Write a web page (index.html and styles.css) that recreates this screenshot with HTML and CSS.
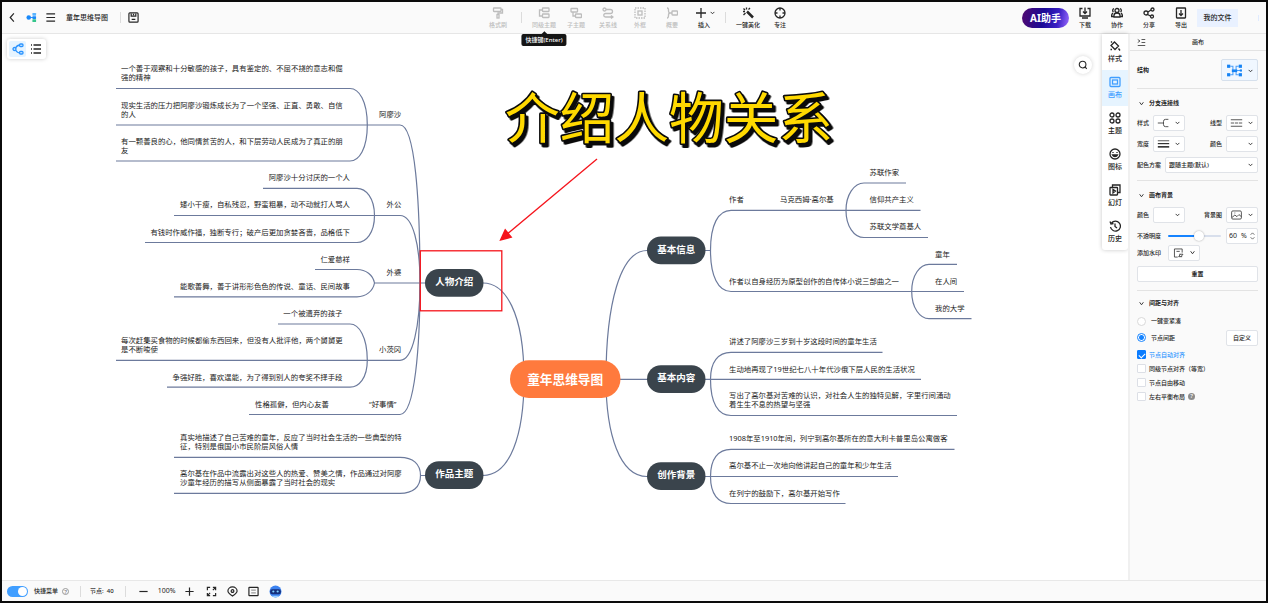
FILE: index.html
```html
<!DOCTYPE html>
<html lang="zh-CN">
<head>
<meta charset="utf-8">
<title>童年思维导图</title>
<link rel="stylesheet" href="styles.css">
</head>
<body>
<div class="app">
  <header class="topbar">
    <div class="top-left">
      <button class="icon-btn" aria-label="返回"><svg class="ico" viewBox="0 0 24 24"><path d="M15 3L7 12l8 9"/></svg></button>
      <button class="icon-btn" aria-label="首页"><svg class="ico" viewBox="0 0 24 24"><g stroke="none"><circle cx="6" cy="12" r="5" fill="#1989fa"/><path d="M8 11h8v2H8z" fill="#1989fa"/><rect x="14" y="2" width="8" height="6" rx="1" fill="#5ab4ff"/><rect x="14" y="9" width="8" height="6" rx="1" fill="#1989fa"/><rect x="14" y="16" width="8" height="6" rx="1" fill="#35c58b"/></g></svg></button>
      <button class="icon-btn" aria-label="菜单"><svg class="ico" viewBox="0 0 24 24"><path d="M3 4h19M3 12h19M3 20h19"/></svg></button>
      <h1 class="doc-title">童年思维导图</h1>
      <span class="sep"></span>
      <button class="icon-btn save" aria-label="保存"><svg class="ico" viewBox="0 0 24 24"><rect x="2" y="2" width="20" height="20" rx="2"/><path d="M7 3v6h10V3M8 16h8M12 4v3"/></svg></button>
    </div>
    <nav class="tools">
      <button class="tool off"><svg class="ico" viewBox="0 0 24 24"><rect x="3" y="2" width="15" height="7" rx="1"/><path d="M18 5h3v7h-9v3"/><rect x="10" y="15" width="4" height="7"/></svg>格式刷</button>
      <span class="sep"></span>
      <button class="tool off tip-host"><svg class="ico" viewBox="0 0 24 24"><rect x="9" y="2" width="13" height="7" rx="1"/><rect x="9" y="14" width="13" height="7" rx="1"/><path d="M9 6H3v12h6"/></svg>同级主题<span class="tip" role="tooltip">快捷键(Enter)</span></button>
      <button class="tool off"><svg class="ico" viewBox="0 0 24 24"><rect x="2" y="3" width="13" height="7" rx="1"/><rect x="11" y="14" width="12" height="7" rx="1"/><path d="M6 10v8h5"/></svg>子主题</button>
      <button class="tool off"><svg class="ico" viewBox="0 0 24 24"><circle cx="5" cy="5" r="3"/><path d="M8 5h9a4 4 0 0 1 0 8H7a3 3 0 0 0 0 7h14M18 17l4 3-4 3"/></svg>关系线</button>
      <button class="tool off"><svg class="ico" viewBox="0 0 24 24"><rect x="2" y="2" width="20" height="20" stroke-dasharray="3 2"/><rect x="8" y="8" width="8" height="8"/></svg>外框</button>
      <button class="tool off"><svg class="ico" viewBox="0 0 24 24"><path d="M2 2c6 0 0 10 6 10-6 0 0 10-6 10M8 12h4"/><rect x="12" y="8" width="11" height="8" rx="1"/></svg>概要</button>
      <button class="tool"><span class="pair"><svg class="ico" viewBox="0 0 24 24"><path d="M12 2v20M2 12h20"/></svg><svg class="chev" viewBox="0 0 8 8"><path d="M1 3l3 3 3-3"/></svg></span>插入</button>
      <span class="sep slim"></span>
      <button class="tool"><svg class="ico" viewBox="0 0 24 24"><path d="M10 9l12 12" stroke-width="5"/><path d="M9 1v4M2 9h4M3 3l3 3M16 2l-3 3M3 16l4-4"/></svg>一键美化</button>
      <button class="tool"><svg class="ico" viewBox="0 0 24 24"><circle cx="12" cy="12" r="10"/><path d="M12 2v5M12 17v5M2 12h5M17 12h5"/></svg>专注</button>
    </nav>
    <div class="top-right">
      <button class="ai">AI助手</button>
      <button class="tool"><svg class="ico" viewBox="0 0 24 24"><path d="M7 3H2v15h20V3h-5M12 1v11M8 9l4 4 4-4M6 22h12"/></svg>下载</button>
      <button class="tool"><svg class="ico" viewBox="0 0 24 24"><circle cx="12" cy="7" r="4"/><path d="M6 20v-3a6 5 0 0 1 12 0v3zM6 3a4 4 0 0 0-1 7M18 3a4 4 0 0 1 1 7M4 12c-3 2-3 4-3 7h4M20 12c3 2 3 4 3 7h-4"/></svg>协作</button>
      <button class="tool"><svg class="ico" viewBox="0 0 24 24"><circle cx="6" cy="12" r="4"/><circle cx="19" cy="5" r="3"/><circle cx="18" cy="19" r="3"/><path d="M10 10l6-4M9 15l6 3"/></svg>分享</button>
      <button class="tool"><svg class="ico" viewBox="0 0 24 24"><rect x="3" y="2" width="18" height="20" rx="1"/><path d="M12 6v11M8 13l4 4 4-4"/></svg>导出</button>
      <a class="files" href="#">我的文件</a>
      <span class="edge"></span>
    </div>
  </header>

  <main class="work">
    <section class="board">
      <div class="views">
        <button class="view on" aria-label="导图"><svg class="ico" viewBox="0 0 24 24"><circle cx="5" cy="12" r="3"/><path d="M7 10c3-5 6-6 9-6M7 14c3 5 6 6 9 6"/><rect x="15" y="2" width="7" height="5" rx="2"/><rect x="15" y="17" width="7" height="5" rx="2"/></svg></button>
        <button class="view" aria-label="大纲"><svg class="ico" viewBox="0 0 24 24"><path d="M7 4h15M7 12h15M7 20h15M2 4h2M2 12h2M2 20h2"/></svg></button>
      </div>
      <button class="search" aria-label="搜索"><svg class="ico" viewBox="0 0 24 24"><circle cx="11" cy="11" r="8"/><path d="M17 17l4 4"/></svg></button>

      <svg class="map" viewBox="20 340 11000 5460" role="img" aria-label="童年思维导图">
        <g class="links">
          <path d="M4830 2830C5050 2830 5240 3120 5240 3790M4830 4755C5100 4755 5240 4350 5240 3790M6470 2505C6200 2505 6060 3050 6060 3790M6470 4765C6200 4765 6060 4350 6060 3790M6200 3793H6480"/>
          <path d="M1160 885H3500C3590 885 3673 1010 3673 1250C3673 1490 3590 1610 3500 1610H1160M1160 1250H4000C4150 1250 4200 2000 4200 2830"/>
          <path d="M2630 1883H3570C3660 1883 3745 1980 3745 2155C3745 2330 3660 2425 3570 2425H1450M1740 2155H4000C4130 2155 4200 2450 4200 2830"/>
          <path d="M3150 2695H3570C3660 2695 3730 2750 3745 2830C3730 2910 3660 2968 3570 2968H1740M3745 2830H4260"/>
          <path d="M2780 3240H3500C3590 3240 3673 3370 3673 3603C3673 3780 3590 3872 3500 3872H1670M1160 3603H4000C4130 3603 4200 3250 4200 2830"/>
          <path d="M2490 4145H4000C4150 4145 4200 3450 4200 2830"/>
          <path d="M1740 4573H4000C4130 4573 4205 4640 4205 4755C4205 4870 4130 4934 4000 4934H1740M4205 4755H4260"/>
          <path d="M7040 2505H7105M8460 2104H7310C7180 2104 7105 2250 7105 2505C7105 2760 7180 2915 7310 2915H9640"/>
          <path d="M9060 1830H8640C8540 1830 8460 1950 8460 2104C8460 2260 8540 2375 8640 2375H9280M8460 2104H9205"/>
          <path d="M9570 2643H9290C9200 2643 9117 2750 9117 2915C9117 3080 9200 3187 9290 3187H9715"/>
          <path d="M7040 3793H9210M8825 3523H7310C7180 3523 7105 3620 7105 3793C7105 4030 7180 4155 7310 4155H9570"/>
          <path d="M7040 4765H8980M9545 4493H7310C7180 4493 7105 4590 7105 4765C7105 4940 7180 5035 7310 5035H8455"/>
        </g>
        <g class="leaf">
          <text x="1210" y="713">一个善于观察和十分敏感的孩子，具有鉴定的、不屈不挠的意志和倔<tspan x="1210" dy="88">强的精神</tspan></text>
          <text x="1210" y="1080">现实生活的压力把阿廖沙锻炼成长为了一个坚强、正直、勇敢、自信<tspan x="1210" dy="88">的人</tspan></text>
          <text x="1210" y="1440">有一颗善良的心，他同情贫苦的人，和下层劳动人民成为了真正的朋<tspan x="1210" dy="88">友</tspan></text>
          <text x="3790" y="1168">阿廖沙</text>
          <text class="end" x="3500" y="1798">阿廖沙十分讨厌的一个人</text>
          <text class="end" x="3500" y="2072">矮小干瘦，自私残忍，野蛮粗暴，动不动就打人骂人</text>
          <text class="end" x="3500" y="2345">有钱时作威作福，独断专行；破产后更加贪婪吝啬，品格低下</text>
          <text x="3865" y="2072">外公</text>
          <text class="end" x="3500" y="2618">仁爱慈祥</text>
          <text class="end" x="3500" y="2890">能歌善舞，善于讲形形色色的传说、童话、民间故事</text>
          <text x="3865" y="2750">外婆</text>
          <text class="end" x="3425" y="3160">一个被遗弃的孩子</text>
          <text x="1210" y="3430">每次赶集买食物的时候都偷东西回来，但没有人批评他，两个舅舅更<tspan x="1210" dy="88">是不断唆使</tspan></text>
          <text class="end" x="3425" y="3798">争强好胜，喜欢逞能，为了得到别人的夸奖不择手段</text>
          <text x="3790" y="3523">小茨冈</text>
          <text x="2550" y="4065">性格孤僻，但内心友善</text>
          <text x="3690" y="4065">“好事情”</text>
          <text x="1800" y="4403">真实地描述了自己苦难的童年，反应了当时社会生活的一些典型的特<tspan x="1800" dy="88">征，特别是俄国小市民阶层风俗人情</tspan></text>
          <text x="1800" y="4763">高尔基在作品中流露出对这些人的热爱、赞美之情，作品通过对阿廖<tspan x="1800" dy="88">沙童年经历的描写从侧面暴露了当时社会的现实</tspan></text>
          <text x="7290" y="2020">作者</text>
          <text x="7800" y="2020">马克西姆·高尔基</text>
          <text x="8695" y="1748">苏联作家</text>
          <text x="8695" y="2022">信仰共产主义</text>
          <text x="8695" y="2294">苏联文学奠基人</text>
          <text x="7290" y="2838">作者以自身经历为原型创作的自传体小说三部曲之一</text>
          <text x="9350" y="2566">童年</text>
          <text x="9350" y="2838">在人间</text>
          <text x="9350" y="3108">我的大学</text>
          <text x="7290" y="3443">讲述了阿廖沙三岁到十岁这段时间的童年生活</text>
          <text x="7290" y="3717">生动地再现了19世纪七八十年代沙俄下层人民的生活状况</text>
          <text x="7290" y="3983">写出了高尔基对苦难的认识，对社会人生的独特见解，字里行间涌动<tspan x="7290" dy="88">着生生不息的热望与坚强</tspan></text>
          <text x="7290" y="4410">1908年至1910年间，列宁到高尔基所在的意大利卡普里岛公寓做客</text>
          <text x="7290" y="4683">高尔基不止一次地向他讲起自己的童年和少年生活</text>
          <text x="7290" y="4955">在列宁的鼓励下，高尔基开始写作</text>
        </g>
        <g class="branch">
          <rect x="4250" y="2690" width="585" height="278" rx="139"/><text x="4542" y="2850">人物介绍</text>
          <rect x="4250" y="4612" width="585" height="278" rx="139"/><text x="4542" y="4772">作品主题</text>
          <rect x="6470" y="2365" width="585" height="278" rx="139"/><text x="6762" y="2525">基本信息</text>
          <rect x="6470" y="3653" width="585" height="278" rx="139"/><text x="6762" y="3813">基本内容</text>
          <rect x="6470" y="4623" width="585" height="278" rx="139"/><text x="6762" y="4783">创作背景</text>
        </g>
        <g class="root"><rect x="5100" y="3602" width="1105" height="378" rx="189"/><text x="5652" y="3842">童年思维导图</text></g>
        <g class="note">
          <rect x="4203" y="2508" width="815" height="600"/>
          <path d="M5970 1590L5060 2350"/>
          <path class="tip-head" d="M5005 2400L5052 2298L5113 2372Z"/>
          <text x="5050" y="1376">介绍人物关系</text>
        </g>
      </svg>
    </section>

    <nav class="rail">
      <button class="rail-item"><svg class="ico" viewBox="0 0 24 24"><path d="M11 4l8 8-7 7-8-8zM4 3l2 2M19 17l3 4M3 19h3"/></svg>样式</button>
      <button class="rail-item on"><svg class="ico" viewBox="0 0 24 24"><rect x="2" y="3" width="20" height="18" rx="2"/><rect x="7" y="8" width="10" height="8"/></svg>画布</button>
      <button class="rail-item"><svg class="ico" viewBox="0 0 24 24"><circle cx="6" cy="6" r="4"/><circle cx="18" cy="6" r="4"/><circle cx="6" cy="18" r="4"/><circle cx="18" cy="18" r="4"/></svg>主题</button>
      <button class="rail-item"><svg class="ico" viewBox="0 0 24 24"><circle cx="12" cy="12" r="10"/><path d="M7 14c2 4 8 4 10 0zM8 8v2M16 8v2"/></svg>图标</button>
      <button class="rail-item"><svg class="ico" viewBox="0 0 24 24"><rect x="2" y="7" width="15" height="15" rx="1"/><path d="M7 7V2h15v15h-5M8 11v7l5-4z"/></svg>幻灯</button>
      <button class="rail-item"><svg class="ico" viewBox="0 0 24 24"><path d="M5 6a10 10 0 1 1-2 8M2 3l2 5 5-1M12 7v6l4 3"/></svg>历史</button>
    </nav>

    <aside class="panel">
      <div class="panel-head">
        <button class="icon-btn" aria-label="收起"><svg class="ico thin" viewBox="0 0 24 24"><path d="M2 4l6 4-6 4M12 4h10M12 12h10M2 20h20"/></svg></button>
        <h2>画布</h2>
      </div>
      <div class="panel-body">
        <section class="group first">
          <div class="row tall"><label for="struct" class="strong">结构</label>
            <span class="pick big"><svg class="glyph blue" viewBox="0 0 32 24"><path d="M8 4h5v16H8M24 4h-5v16h5M16 12h12"/><g class="solid"><rect x="2" y="1" width="6" height="6"/><rect x="2" y="17" width="6" height="6"/><rect x="24" y="1" width="6" height="6"/><rect x="24" y="17" width="6" height="6"/><rect x="11" y="10" width="10" height="5"/><rect x="26" y="10" width="4" height="4"/></g></svg><select id="struct"><option></option></select><svg class="chev" viewBox="0 0 8 8"><path d="M1 3l3 3 3-3"/></svg></span></div>
        </section>
        <section class="group">
          <h3><svg class="chev" viewBox="0 0 8 8"><path d="M1 2l3 4 3-4"/></svg>分支连接线</h3>
          <div class="row"><label for="ls">样式</label><span class="pick"><svg class="glyph" viewBox="0 0 32 24"><path d="M2 12h14M28 3h-7q-5 0-5 5v8q0 5 5 5h7"/></svg><select id="ls"><option></option></select><svg class="chev" viewBox="0 0 8 8"><path d="M1 3l3 3 3-3"/></svg></span>
            <label for="lt" class="push">线型</label><span class="pick"><svg class="glyph" viewBox="0 0 32 24"><path d="M2 4h28M2 20h28"/><path d="M2 12h28" stroke-dasharray="8 2"/></svg><select id="lt"><option></option></select><svg class="chev" viewBox="0 0 8 8"><path d="M1 3l3 3 3-3"/></svg></span></div>
          <div class="row"><label for="lw">宽度</label><span class="pick"><svg class="glyph" viewBox="0 0 32 24"><path d="M2 4h28"/><path d="M2 11h28" stroke-width="3"/><path d="M2 19h28" stroke-width="4"/></svg><select id="lw"><option></option></select><svg class="chev" viewBox="0 0 8 8"><path d="M1 3l3 3 3-3"/></svg></span>
            <label for="lc" class="push">颜色</label><span class="pick"><select id="lc"><option></option></select><svg class="chev" viewBox="0 0 8 8"><path d="M1 3l3 3 3-3"/></svg></span></div>
          <div class="row"><label for="scheme">配色方案</label><span class="pick wide"><select id="scheme"><option>跟随主题(默认)</option></select><svg class="chev" viewBox="0 0 8 8"><path d="M1 3l3 3 3-3"/></svg></span></div>
        </section>
        <section class="group">
          <h3><svg class="chev" viewBox="0 0 8 8"><path d="M1 2l3 4 3-4"/></svg>画布背景</h3>
          <div class="row"><label for="bc">颜色</label><span class="pick"><select id="bc"><option></option></select><svg class="chev" viewBox="0 0 8 8"><path d="M1 3l3 3 3-3"/></svg></span>
            <label for="bi" class="push">背景图</label><span class="pick"><svg class="glyph" viewBox="0 0 32 24"><rect x="4" y="2" width="24" height="20" rx="3"/><path d="M5 18l7-6 5 4 5-5 6 5M11 7h2"/></svg><select id="bi"><option></option></select><svg class="chev" viewBox="0 0 8 8"><path d="M1 3l3 3 3-3"/></svg></span></div>
          <div class="row"><label for="op">不透明度</label><input id="op" class="slider" type="range" min="0" max="100" value="60"><span class="spin"><input aria-label="不透明度数值" value="60"><span>%</span><svg viewBox="0 0 8 16"><path d="M1 6l3-3 3 3M1 10l3 3 3-3"/></svg></span></div>
          <div class="row snug"><label for="wm">添加水印</label><span class="pick"><svg class="glyph" viewBox="0 0 32 24"><path d="M14 22H6V2h19v9M11 8h8M17 21l3-6M22 21l5-6M18 15h9M16 21h9"/></svg><select id="wm"><option></option></select><svg class="chev" viewBox="0 0 8 8"><path d="M1 2l3 4 3-4"/></svg></span></div>
          <button class="box-btn full">重置</button>
        </section>
        <section class="group last">
          <h3><svg class="chev" viewBox="0 0 8 8"><path d="M1 2l3 4 3-4"/></svg>间距与对齐</h3>
          <label class="opt"><input type="radio" name="gap">一键变紧凑</label>
          <div class="row near"><label class="opt"><input type="radio" name="gap" checked>节点间距</label><button class="box-btn push">自定义</button></div>
          <div class="checks">
            <label class="check on"><input type="checkbox" checked>节点自动对齐</label>
            <label class="check"><input type="checkbox">同级节点对齐（等宽）</label>
            <label class="check"><input type="checkbox">节点自由移动</label>
            <label class="check"><input type="checkbox">左右平衡布局<span class="help">?</span></label>
          </div>
        </section>
      </div>
    </aside>
  </main>

  <footer class="status">
    <label class="switch"><input type="checkbox" role="switch" checked>快捷菜单</label>
    <span class="q">?</span>
    <span class="sep"></span>
    <span class="count">节点:&nbsp; 40</span>
    <span class="sep"></span>
    <div class="zoomer">
      <button class="icon-btn" aria-label="缩小"><svg class="ico" viewBox="0 0 24 24"><path d="M3 12h18"/></svg></button>
      <span class="pct">100%</span>
      <button class="icon-btn" aria-label="放大"><svg class="ico" viewBox="0 0 24 24"><path d="M12 3v18M3 12h18"/></svg></button>
    </div>
    <div class="modes">
      <button class="icon-btn" aria-label="全屏"><svg class="ico" viewBox="0 0 24 24"><path d="M3 9V3h6M15 3h6v6M21 15v6h-6M9 21H3v-6M15 9l5-5M9 15l-5 5"/></svg></button>
      <button class="icon-btn" aria-label="定位"><svg class="ico" viewBox="0 0 24 24"><path d="M12 22c-6-4-10-7-10-11a10 9 0 0 1 20 0c0 4-4 7-10 11z"/><circle cx="12" cy="11" r="3"/></svg></button>
      <button class="icon-btn" aria-label="缩略图"><svg class="ico" viewBox="0 0 24 24"><rect x="2" y="3" width="20" height="18" rx="1"/><path d="M7 9h10M7 15h10" stroke="#999"/></svg></button>
      <button class="icon-btn bot" aria-label="助手"><svg viewBox="0 0 24 24"><circle cx="12" cy="12" r="11" fill="#3b82f0"/><path d="M5 20q7 6 14 0z" fill="#9fd4ff"/><rect x="2" y="8" width="20" height="9" rx="4" fill="#16307c"/><circle cx="8" cy="12" r="2" fill="#7fd0ff"/><circle cx="16" cy="12" r="2" fill="#7fd0ff"/></svg></button>
    </div>
  </footer>
</div>
</body>
</html>
```
FILE: styles.css
```css
* { box-sizing: border-box; margin: 0; padding: 0; }

body {
  font: 500 6px/8px "Noto Sans", "Noto Sans CJK SC", sans-serif;
  color: #262626;
  background: #0b0b0b;
}

button, input, select { font: inherit; color: inherit; border: 0; background: none; }
a { color: inherit; text-decoration: none; }
h1, h2, h3 { font-size: inherit; font-weight: 500; }
svg { display: block; flex: none; }

.app {
  display: flex;
  flex-direction: column;
  height: 100vh;
  border: 2px solid #0b0b0b;
  background: #fff;
}

.ico {
  width: 12px;
  height: 12px;
  fill: none;
  stroke: currentColor;
  stroke-width: 2.6;
}
.ico.thin { stroke-width: 2; }
.chev { width: 5px; height: 5px; fill: none; stroke: currentColor; stroke-width: 1.4; }
.sep { width: 1px; height: 11px; background: #dcdcdc; }
.icon-btn { display: grid; place-items: center; }

/* top bar */
.topbar {
  display: flex;
  align-items: center;
  height: 32px;
  padding-left: 5px;
  background: #fafafa;
  border-bottom: 1px solid #e6e6e6;
}
.top-left, .top-right { flex: 1; display: flex; align-items: center; }
.top-left .ico { width: 11px; height: 11px; }
.top-left .icon-btn { margin-right: 8px; }
.top-left .sep { margin: 0 7px 0 12px; }
.doc-title { margin-left: 2px; font-size: 7px; line-height: 10px; }
.tools { display: flex; align-items: center; margin-left: 12px; }
.tools .sep { margin: 0 6px 0 7px; }
.tools .sep.slim { margin: 0 6px 0 5px; }
.tool {
  display: flex;
  flex-direction: column;
  align-items: center;
  gap: 2px;
  width: 32px;
  white-space: nowrap;
}
.tool.off { color: #bdbdbd; }
.pair { display: flex; align-items: center; gap: 3px; margin-left: 2px; }
.tip-host { position: relative; }
.tip {
  position: absolute;
  top: 27px;
  left: 50%;
  transform: translateX(-50%);
  padding: 2px 4px;
  border-radius: 2px;
  color: #fff;
  background: #151515;
}
.tip::before {
  content: "";
  position: absolute;
  left: 50%;
  top: -2px;
  width: 4px;
  height: 4px;
  margin-left: -2px;
  background: #151515;
  transform: rotate(45deg);
}
.top-right { justify-content: flex-end; padding-right: 7px; }
.ai {
  height: 20px;
  width: 47px;
  border-radius: 10px;
  color: #fff;
  font-size: 10px;
  font-weight: 700;
  background: linear-gradient(100deg, #52096f, #1b0a96 45%, #3a1fc4 75%, #9b6bff);
}
.files {
  padding: 4px 5px;
  font-size: 7px;
  line-height: 10px;
  background: #e9f1ff;
  width: 41px;
  text-align: center;
  white-space: nowrap;
}
.edge { width: 1px; height: 6px; margin-left: 20px; background: #e0ebff; }

/* canvas */
.work { flex: 1; display: flex; min-height: 0; }
.board { flex: 1; position: relative; min-width: 0; }
.map { width: 100%; height: 100%; }
.views {
  position: absolute;
  left: 5px;
  top: 5px;
  display: flex;
  gap: 1px;
  padding: 2px;
  border-radius: 3px;
  background: #fff;
  box-shadow: 0 0 4px rgba(0, 0, 0, .2);
}
.view { display: grid; place-items: center; width: 17px; height: 16px; border-radius: 2px; }
.view.on { color: #2a93ff; background: #e6f4ff; }
.search {
  position: absolute;
  right: 10px;
  top: 22px;
  display: grid;
  place-items: center;
  width: 18px;
  height: 18px;
  border-radius: 50%;
  background: #fff;
  box-shadow: 0 0 4px rgba(0, 0, 0, .18);
}
.search .ico { width: 10px; height: 10px; }

.links { fill: none; stroke: #6c7a9c; stroke-width: 12; }
.leaf text { font-size: 74px; font-weight: 400; fill: #222; }
.leaf .end { text-anchor: end; }
.branch rect { fill: #3a444c; }
.branch text { font-size: 95px; font-weight: 700; fill: #fff; text-anchor: middle; }
.root rect { fill: #ff7a3d; }
.root text { font-size: 127px; font-weight: 700; fill: #fff; text-anchor: middle; }
.note rect, .note path { fill: none; stroke: #f5141c; stroke-width: 13; }
.note .tip-head { fill: #f5141c; }
.note text {
  font-size: 547px;
  font-weight: 400;
  fill: #ffd900;
  stroke: #0a0a0a;
  stroke-width: 32;
  stroke-linejoin: round;
  paint-order: stroke;
  filter: drop-shadow(25px 30px 0 #0a0a0a);
}

/* side rail */
.rail {
  align-self: flex-start;
  width: 26px;
  background: #fff;
  border-radius: 0 0 3px 3px;
  box-shadow: 0 0 4px rgba(0, 0, 0, .22);
}
.rail-item {
  display: flex;
  flex-direction: column;
  align-items: center;
  justify-content: center;
  gap: 2px;
  width: 100%;
  height: 36px;
  font-size: 7px;
  line-height: 10px;
}
.rail-item.on { color: #409eff; background: #e6f4ff; }

/* settings panel */
.panel { width: 138px; background: #fafafa; border-left: 2px solid #f0f0f0; }
.panel-head {
  display: grid;
  grid-template-columns: 12px 1fr 12px;
  align-items: center;
  height: 17px;
  padding: 0 5px;
  border-bottom: 1px solid #e3e3e3;
}
.panel-head h2 { text-align: center; }
.panel-head .ico { width: 9px; height: 9px; }
.panel-body { padding: 0 8px 0 7px; }
.group { display: flex; flex-direction: column; gap: 6px; padding: 10px 0 8px; border-bottom: 1px solid #e3e3e3; }
.group.first { padding: 8px 0 7px; }
.group.last { border: 0; padding-top: 8px; }
.group h3 { display: flex; align-items: center; gap: 5px; padding-left: 2px; font-weight: 700; height: 8px; margin-bottom: 2px; }
.row { display: flex; align-items: center; height: 15px; gap: 4px; white-space: nowrap; }
.row.tall { height: 22px; justify-content: space-between; }
.row.snug { margin-top: -4px; gap: 7px; }
.row.near { margin-top: -3px; }
.strong { font-weight: 700; }
.push { margin-left: auto; }

.pick {
  display: grid;
  align-items: center;
  width: 32px;
  height: 16px;
  border: 1px solid #e0e3e8;
  border-radius: 2px;
  background: #fff;
}
.pick > * { grid-area: 1 / 1; }
.pick select { width: 100%; height: 100%; padding-left: 3px; appearance: none; }
.pick .chev { justify-self: end; margin-right: 4px; pointer-events: none; }
.pick.wide { flex: 1; }
.pick.big { width: 37px; height: 22px; background: #f0f7ff; border-color: #d6e0ec; }
.glyph { width: 13px; height: 10px; margin-left: 3px; fill: none; stroke: #333; stroke-width: 2; pointer-events: none; }
.glyph.blue { width: 17px; height: 13px; margin-left: 4px; stroke: #4ba0fa; }
.glyph .solid { fill: #1583f5; stroke: none; }

.slider { appearance: none; flex: 1; min-width: 0; height: 10px; margin: 0 1px 0 3px; }
.slider::-webkit-slider-runnable-track {
  height: 2px;
  border-radius: 1px;
  background: linear-gradient(90deg, #1583ff 60%, #d8dfec 60%);
}
.slider::-webkit-slider-thumb {
  appearance: none;
  width: 10px;
  height: 10px;
  margin-top: -4px;
  border-radius: 50%;
  background: #fff;
  box-shadow: 0 0 2px rgba(0, 0, 0, .35);
}
.spin {
  display: flex;
  align-items: center;
  width: 32px;
  height: 16px;
  padding: 0 2px;
  border: 1px solid #e0e3e8;
  border-radius: 2px;
  background: #fff;
  font-size: 7px;
  font-weight: 400;
}
.spin input { width: 12px; }
.spin svg { width: 5px; height: 10px; margin-left: auto; fill: none; stroke: #444; stroke-width: 1.2; }
.box-btn { width: 32px; height: 16px; border: 1px solid #e0e3e8; border-radius: 2px; background: #fff; }
.box-btn.full { width: 100%; font-weight: 700; }

.opt { display: flex; align-items: center; gap: 5px; height: 12px; }
.opt input { appearance: none; width: 9px; height: 9px; border: 1px solid #d9d9d9; border-radius: 50%; background: #fff; }
.opt input:checked { border-color: #1583ff; background: radial-gradient(circle, #1583ff 2px, #fff 3px); }
.checks { display: flex; flex-direction: column; gap: 5px; margin-top: -1px; }
.check { display: flex; align-items: center; gap: 3px; height: 9px; }
.check.on { color: #2a93ff; }
.check input { appearance: none; width: 9px; height: 9px; border: 1px solid #dcdfe6; border-radius: 1px; background: #fff; }
.check input:checked { display: grid; place-items: center; border-color: #0a7cff; background: #0a7cff; }
.check input:checked::before {
  content: "";
  width: 5px;
  height: 3px;
  border: solid #fff;
  border-width: 0 0 1px 1px;
  transform: rotate(-45deg);
}
.help, .q { display: grid; place-items: center; width: 7px; height: 7px; border-radius: 50%; line-height: 7px; }
.help { color: #fff; background: #8c8c8c; }

/* status bar */
.status {
  display: flex;
  align-items: center;
  height: 21px;
  padding-left: 5px;
  background: #fafafa;
  border-top: 1px solid #e8e8e8;
}
.switch { display: flex; align-items: center; gap: 6px; }
.switch input { appearance: none; display: flex; justify-content: flex-end; align-items: center; width: 21px; height: 11px; padding: 1px; border-radius: 6px; background: #409eff; }
.switch input::before { content: ""; width: 9px; height: 9px; border-radius: 50%; background: #fff; }
.q { margin-left: 4px; border: 1px solid #999; color: #777; }
.status .sep { margin: 0 9px 0 11px; }
.count { white-space: nowrap; }
.zoomer { display: flex; align-items: center; gap: 9px; margin-left: 3px; }
.zoomer .ico { width: 11px; height: 11px; }
.pct { font-size: 7px; font-weight: 400; }
.modes { display: flex; align-items: center; gap: 10px; margin-left: 11px; }
.modes .ico { width: 11px; height: 11px; }
.bot svg { width: 13px; height: 13px; }
```
